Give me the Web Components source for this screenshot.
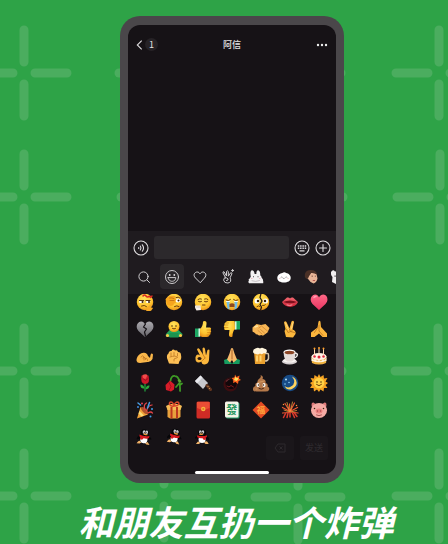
<!DOCTYPE html>
<html lang="zh-CN">
<head>
<meta charset="utf-8">
<meta name="viewport" content="width=device-width, initial-scale=1">
<title>阿信</title>
<style>
html, body { margin: 0; background: #2ea347; }
body { font-family: "Noto Sans CJK SC", sans-serif; }
</style>
</head>
<body>
<promo-stage>
  <phone-frame>
    <chat-header></chat-header>
    <chat-log></chat-log>
    <chat-input></chat-input>
    <sticker-tabs></sticker-tabs>
    <emoji-panel></emoji-panel>
  </phone-frame>
  <promo-caption slot="caption">和朋友互扔一个炸弹</promo-caption>
</promo-stage>
<script>
const define = (name, html, setup) => customElements.define(name, class extends HTMLElement {
  connectedCallback() {
    if (this.shadowRoot) return;
    this.attachShadow({ mode: 'open' }).innerHTML = html;
    if (setup) setup(this.shadowRoot, this);
  }
});

const BUTTON = 'button{all:unset;box-sizing:border-box;display:grid;place-items:center;cursor:pointer}svg{display:block}';

/* Stage with the sparkle pattern */
const cross = (x, y) => `<path d="M${x - 43} ${y}h32M${x + 11} ${y}h32M${x} ${y - 43}v32M${x} ${y + 11}v32"/>`;
const pattern = [[24, 73], [24, 197], [24, 371], [24, 496], [439, 73], [440, 197], [438, 371], [439, 496], [164, 495], [298, 497]]
  .map(([x, y]) => cross(x, y)).join('') + [[119, 73], [121, 197], [120, 371]]
  .map(([x, y]) => `<path d="M${x} ${y}h222"/>`).join('');
define('promo-stage', `<style>
:host{display:flex;flex-direction:column;box-sizing:border-box;min-height:100vh;padding:16px 104px 0 120px;position:relative;overflow:hidden}
.bg{position:absolute;inset:0;width:100%;height:100%}
.phone{position:relative;flex:1;display:flex}
</style>
<svg class="bg" viewBox="0 0 448 544" preserveAspectRatio="xMidYMid slice" aria-hidden="true"><g stroke="#4bad5f" stroke-width="9" stroke-linecap="round" fill="none">${pattern}</g></svg>
<div class="phone"><slot></slot></div><slot name="caption"></slot>`);

define('promo-caption', `<style>
:host{display:flex;justify-content:center;position:relative;padding:18px 0 3px 8px;margin:0 -60px;color:#fff;white-space:nowrap}
p{margin:0;font-size:35px;line-height:40px;font-weight:700;font-style:italic}
</style><p><slot></slot></p>`);

define('phone-frame', `<style>
:host{flex:1;min-width:0;display:flex;box-sizing:border-box;padding:9px 8px;border-radius:20px;background:#4a474a}
.screen{flex:1;min-width:0;display:flex;flex-direction:column;position:relative;overflow:hidden;border-radius:12px;background:#161216}
.home{position:absolute;left:50%;bottom:0;width:74px;height:3px;margin-left:-37px;border-radius:2px;background:#fff}
</style><div class="screen"><slot></slot><div class="home"></div></div>`);

define('chat-header', `<style>${BUTTON}
:host{display:grid;grid-template-columns:1fr auto 1fr;align-items:center;height:39px;padding:0 8px;color:#e4e2e4}
.left{display:flex;align-items:center;gap:1px}
.badge{width:13px;height:13px;border-radius:7px;background:#262226;font:9px/13px "Noto Sans CJK SC",sans-serif;text-align:center}
h1{margin:0;font-size:9px;line-height:14px;font-weight:500}
.more{justify-self:end}
</style>
<div class="left"><button aria-label="返回"><svg width="8" height="10" viewBox="0 0 8 10"><path d="M5.700.6 1.300 5l4.400 4.400" fill="none" stroke="#dddbdd" stroke-width="1.1"/></svg></button><span class="badge">1</span></div>
<h1>阿信</h1>
<button class="more" aria-label="更多"><svg width="12" height="4" viewBox="0 0 12 4" fill="#eee"><circle cx="2" cy="2" r="1.2"/><circle cx="6" cy="2" r="1.2"/><circle cx="10" cy="2" r="1.2"/></svg></button>`);

define('chat-log', `<style>:host{display:block;flex:1}</style><slot></slot>`);

define('chat-input', `<style>${BUTTON}
:host{display:flex;align-items:center;gap:5px;padding:5px 5px 3px;background:#1f1b1f}
input{flex:1;min-width:0;height:23px;box-sizing:border-box;border:0;border-radius:3px;background:#2c292c;color:#eee;font:10px "Noto Sans CJK SC",sans-serif;outline:0;padding:0 5px}
svg{fill:none;stroke:#dddbdd;stroke-width:1.1;stroke-linecap:round}
</style>
<button aria-label="语音"><svg width="16" height="16" viewBox="0 0 16 16"><circle cx="8" cy="8" r="7"/><path d="M5.700 7.500v1M7.300 6q1.400 2 0 4M9.300 4.800q2.500 3.200 0 6.400"/></svg></button>
<input type="text" aria-label="消息">
<button aria-label="键盘"><svg width="16" height="16" viewBox="0 0 16 16"><circle cx="8" cy="8" r="7"/><path d="M3.800 6h8.400M3.800 8.200h8.400" stroke-width="1.500" stroke-dasharray="1.500 .8" stroke-linecap="butt"/><path d="M6 10.900h4" stroke-width="1.300"/></svg></button>
<button aria-label="添加"><svg width="16" height="16" viewBox="0 0 16 16"><circle cx="8" cy="8" r="7"/><path d="M8 4.500v7M4.500 8h7"/></svg></button>`);

const tabs = [
  ['搜索', '<circle cx="8.500" cy="8.500" r="4.600"/><path d="m12 12 2.500 2.500"/>'],
  ['表情', '<circle cx="9" cy="9" r="6.500"/><circle cx="6.700" cy="7" r=".9" fill="#dddbdd" stroke="none"/><circle cx="11.300" cy="7" r=".9" fill="#dddbdd" stroke="none"/><path d="M5.200 9.600h7.600c-.2 5-7.400 5-7.600 0Z"/>'],
  ['收藏', '<path d="M9 14.500 4.500 10C1.400 6.800 4 4 6.200 4 7.800 4 8.500 5 9 6c.5-1 1.200-2 2.800-2 2.200 0 4.800 2.800 1.700 6Z"/>'],
  ['手势', '<path d="M6.300 9.200 4 5q-.3-1.500 1-1.300L7.500 8V3.500Q8.300 2 9.300 3.500v4.700l2.300-3.400q1.500-.5 1.300 1l-1.800 4q2 4.500-2.200 5.200-3.700.3-4.200-2.700-.3-2 1.600-3.100Z"/><path d="M6 10q2-.7 3 .8T7.500 12.600M12.600 2.500h2M13.600 1.500v2"/>'],
  ['兔子', '<g stroke="none"><path fill="#f3f1f2" d="M3.800 8.500C3 5 3.500 2 5.200 2.200S7.400 4 7.600 6h1.800C9.200 4 9.800 2 11.200 2.200s2.300 2.500 2 5q1.600 1 1.300 2.400 2.200 1.600 1.700 5.600H2q-1.200-1.200 0-3-1-1 .8-1.600Z"/><path fill="#4a4549" d="M6 8.300h1v1H6zM10.500 8.300h1v1h-1z"/><path d="M5 12.800q3.500 1.500 7.500-.2" fill="none" stroke="#b5adb2" stroke-width=".7"/><path fill="#e9a8af" d="M4 10h1.500v.8H4zM12 10h1.500v.8H12z"/></g>'],
  ['团子', '<g stroke="none"><path fill="#fff" d="M2.300 10c0-3 2.700-4.700 5-5 1-.8 3-1 3.800 0 2.500.3 4.800 2.500 4.600 5 0 3-3 4.500-6.700 4.500S2.300 13 2.300 10Z"/></g><path d="M6 9.200q.7-.7 1.400 0M10.600 9.200q.7-.7 1.400 0M8.300 10.400h1" stroke="#6b6568" stroke-width=".6"/><path stroke="none" fill="#f1b8b8" d="M4 10.200h1.400v.8H4zM12.400 10.200h1.400v.8h-1.400z"/>'],
  ['小孩', '<g stroke="none"><path fill="#e8b496" d="M3.500 6q5-4 10 0l1 4.500q-.8 4-3.900 5-3.300-.6-5-4L3 9.500Z"/><path fill="#4a3026" d="M1.800 8.500Q1.200 2.300 7.500 2q6-.2 6.500 4.500-3-1.800-5.800-1.500L6.500 7.500l-.6 1-1 2.200Q2.200 11 1.800 8.500Z"/><path fill="#5d3a2c" d="M8.500 7.800H10v.8H8.500zM11.800 7.800H13v.8h-1.200z"/><path fill="#b5574f" d="M9.800 12h2.200v1H9.800z"/></g>'],
  ['小狗', '<g stroke="none"><path fill="#f1eff0" d="M0 4q2-3 4-.5Q8 2 13 4.500v9l-8 2.500-4-2 .5-5Q-.5 7 0 4Z"/><path fill="#3d383b" d="M3.500 7.500h1.200v1.300H3.500z"/></g>']
];
define('sticker-tabs', `<style>${BUTTON}
:host{display:flex;gap:4px;padding:2px 0 5px 4px;background:#1f1b1f;overflow:hidden}
button{flex:none;width:24px;height:25px;border-radius:4px}
button[aria-selected=true]{background:#2b282b}
svg{fill:none;stroke:#cfcdcf;stroke-width:1;stroke-linecap:round;stroke-linejoin:round}
</style>${tabs.map(([n, p], i) => `<button role="tab" aria-label="${n}" aria-selected="${i === 1}"><svg width="18" height="18" viewBox="0 0 18 18">${p}</svg></button>`).join('')}`);

/* Emoji artwork on a 36-unit square */
const F = '<circle cx="18" cy="18" r="16.500" fill="url(#y)"/>';
const dot = (x, y, r = 2, c = '#3b2209') => `<circle cx="${x}" cy="${y}" r="${r}" fill="${c}"/>`;
const line = (d, c = '#6b3b0c', w = 2) => `<path d="${d}" fill="none" stroke="${c}" stroke-width="${w}" stroke-linecap="round" stroke-linejoin="round"/>`;
const fill = (d, c = 'url(#y)') => `<path d="${d}" fill="${c}"/>`;
const penguin = pose => `<g transform="${pose}">${fill('M12 26 6 29l-3 5h7l6-5zM22 26l6 3 4 5h-7l-6-5z', '#f2b268')}${fill('M9 15C3 18 0 24 3 26l8-5zM26 15c6 1 9 4 8 7l-8-2z', '#060608')}<ellipse cx="18" cy="20" rx="11" ry="12" fill="#060608"/><ellipse cx="18" cy="24" rx="8" ry="8" fill="#fff"/><ellipse cx="18" cy="9" rx="9" ry="8" fill="#060608"/><ellipse cx="16" cy="7" rx="3" ry="4" fill="#c9c9cf"/><ellipse cx="22" cy="7" rx="3" ry="4" fill="#c9c9cf"/>${dot(17, 8, 1.2)}${dot(21, 8, 1.2)}<ellipse cx="20" cy="12" rx="5" ry="1.800" fill="#e99a3a"/>${fill('M7 14q11 4 22 0v5q-5 3-12 2l-3 4-5-1 1-4-3-2z', '#d71920')}</g>`;
const art = [
  ['打脸', F + line('M7 15h8M20 15h8', '#5b3410', 2.500) + '<path fill="#fff" d="M6 16h9v4H7zM20 16h9l-2 4h-6z"/>' + dot(13, 18) + dot(26, 18) + line('M11 26q6-3 10 1') + line('M14 6q3-4 6 0t7 0l2 3 3-3', '#d92c22', 3) + fill('M20 35c0-5 5-7 8-11 3 0 3 3 1 5 5-1 6 2 3 4-2 4-8 5-12 2', '#f7aa26')],
  ['捂脸', F + '<ellipse cx="26" cy="15" rx="5" ry="4" fill="#fff"/>' + dot(27, 15) + line('M22 9q5-2 8 1M19 27q5-3 9 0') + fill('M1 13C3 6 14 4 20 6c3 2 0 4-3 4 6 0 8 4 3 6 4 3 1 6-2 5 0 6-10 6-14 2Z', '#f6a51e') + line('M9 10q5-1 9 1M10 15h8', '#ba6710', 1.500)],
  ['嘘', F + line('M8 13q4-3 7-1M21 12q4-2 7 1M9 17q3 2 6 0M21 17q3 2 6 0M17 24h5') + fill('M2 25h11l1 9-9 1q-4-4-3-10', '#f8f1ea') + line('M5 28h7', '#b7aaa0', 1)],
  ['大哭', F + line('M6 14q5 3 9-1M21 13q4 4 9 1') + fill('M7 17h6v16l-4-2zM23 17h6l-1 13-5 3z', '#6fbde8') + fill('M13 22q5-3 10 0v6H13z', '#8d4a1c') + line('M7 17h6M23 17h6', '#e9faff', 2)],
  ['裂开', F + '<ellipse cx="10" cy="16" rx="5" ry="5" fill="#fff"/><ellipse cx="27" cy="16" rx="5" ry="5" fill="#fff"/>' + dot(12, 16, 2.500) + dot(26, 16, 2.500) + line('m18 1-2 8 4 7-4 7 3 5-2 7', '#2a1a16', 2.500) + line('M10 27q4-3 6 0M21 25q4 1 6-2')],
  ['嘴唇', fill('M2 18 12 9q4-1 6 2 2-3 6-2l10 9c-6 13-25 13-32 0', 'url(#r)') + fill('M4 18q14-6 28 0-13 5-28 0', '#7d101d') + line('M12 24q5 2 10 0', '#ff9aa6', 2)],
  ['爱心', fill('M18 34 5 22C-2 14 2 4 10 3c5 0 7 3 8 6 1-3 4-6 9-6 8 1 11 11 4 19Z', 'url(#p)') + line('M8 9q1-2 4-2', '#ffa0b4', 3)],
  ['心碎', fill('M18 34 5 22C-2 14 2 4 10 3c5 0 7 3 8 6 1-3 4-6 9-6 8 1 11 11 4 19Z', 'url(#g)') + line('m19 8-4 6 6 4-4 6 2 8', '#161216', 2.500)],
  ['拥抱', fill('M5 34Q0 34 2 28l8-9h16l9 9q0 6-6 6z', '#23a45a') + fill('M9 26h18v9H9z', '#1c9350') + '<circle cx="18" cy="13" r="11" fill="url(#y)"/>' + dot(14, 12, 1.500) + dot(22, 12, 1.500) + line('M15 17q3 2 6 0') + '<circle cx="5" cy="31" r="3" fill="#ffc846"/><circle cx="31" cy="31" r="3" fill="#ffc846"/>'],
  ['强', fill('M2 17h10v17H2z', '#1ca863') + fill('M9 17h4v16H9z', '#d8f6e1') + fill('M12 18c4-4 6-9 6-15 4-3 8 0 7 5l-1 7h8q4 2 1 5 3 2 0 5 1 4-2 5-1 4-5 4H16l-4-2Z') + line('M26 20h6M27 25h5M26 30h4', '#ce7d10', 1.200)],
  ['弱', fill('M24 2h10v17H24z', '#1ca863') + fill('M23 3h4v16h-4z', '#d8f6e1') + fill('M24 18c-4 4-5 9-5 15-4 3-8 0-7-5l1-8H5q-4-1-2-5-3-2 0-5-1-4 2-5 2-4 6-3h12Z') + line('M4 15h6M4 10h6M6 6h5', '#ce7d10', 1.200)],
  ['握手', fill('M1 15 9 8l9 2 9-2 8 8-4 9-7 5q-3 2-5 0-5 2-8-1-4 0-5-3l-5-3Z', '#f8b655') + line('m14 16 5-4 13 11M17 19l8 7M12 21l8 7', '#c47b2c', 1.300) + line('m6 14 5-2', '#ffe399', 3)],
  ['胜利', fill('M10 34 7 22 9 18 6 5q2-4 5-1l6 13 4-14q4-3 5 1l-3 15q8 3 6 9l-5 7Z', '#fbb73d') + line('m11 19 3 6 8-3M16 17l3 6 8 2', '#b87020', 1.500) + line('m9 6 6 13M24 5l-3 12', '#ffe59a', 1.500)],
  ['抱拳', fill('M2 34v-9l13-10 2-12q3-3 4 1l1 10 12 13v7H25l-7-7-9 7Z', '#fbb53d') + line('M18 10v12l8 9M15 16l-6 9', '#b87020', 1.500)],
  ['勾引', fill('M1 27c0-7 5-14 12-15 6-2 10 2 11 6l4 4 1-6q2-5 5-1l-1 9q-4 7-10 6l-15 2Q2 32 1 27', '#fab74a') + line('M10 20q4-5 6 0v6M14 22q5-4 5 3M19 23q4-2 4 4', '#b87020', 1.500)],
  ['拳头', fill('M8 33 4 22q-1-7 3-9 0-6 6-5 3-5 7-1 5-2 6 3 6 0 6 6 2 8-3 12l-2 6Z', '#fdbf55') + line('M12 12v6M18 11v6M25 13v5M10 20q12-4 15 1l-7 3v4', '#b87020', 1.500)],
  ['OK', fill('M3 20q3-8 9-3L6 5q2-4 5-1l7 11-1-12q3-4 5 1l2 13 3-11q4-2 4 1l-1 19q-1 8-9 9-6 0-6-6c-7 4-12 1-12-5Z', '#fbb73d') + '<ellipse cx="11" cy="23" rx="4" ry="3" fill="#27180e"/>' + line('M18 15l4 7M17 27l5-5', '#bd7015', 1.500)],
  ['合十', fill('M2 26 10 23l8 11H3zM34 26l-8-3-8 11h15z', '#169c60') + fill('m8 25 5-12 3-10q2-2 4 0l3 10 5 12-7 6-3-5-4 5Z', '#f8b96a') + line('M18 6v18', '#a55d25', 1.800)],
  ['啤酒', line('M26 13h5q2 0 2 3v7q-1 5-7 5', '#d3c3a8', 3) + fill('M4 8h23l-1 26H6Z', '#eaa02e') + fill('M8 17h4v12H8zM15 17h4v12h-4z', '#ffd26d') + fill('M3 12q-3-7 4-9 5-3 9 0 4-3 8 0 8 1 5 8-3 3-5 1-4 4-8 1-5 4-13-1', '#fff5dd')],
  ['咖啡', '<ellipse cx="17" cy="29" rx="15" ry="6" fill="#d5ced0"/><ellipse cx="17" cy="27" rx="13" ry="4" fill="#f9f5f3"/>' + line('M26 12q9 0 6 6-2 4-8 4', '#eee9e7', 3) + fill('M5 10h24q0 17-8 19h-8Q6 27 5 10', '#e4dbd8') + '<ellipse cx="17" cy="10" rx="12" ry="5" fill="#fff"/><ellipse cx="17" cy="11" rx="10" ry="3.500" fill="#8b4525"/>'],
  ['蛋糕', fill('M3 19q15-8 30 0l-1 13q-14 6-28 0Z', '#f0b557') + '<ellipse cx="18" cy="19" rx="15" ry="7" fill="#fff5e8"/>' + fill('M3 20q4 9 7 3 4 8 8 2 4 7 8-1 4 6 7-4v8q-15 7-30 0Z', '#fff4df') + line('M9 15V5M18 14V4M27 15V5', '#ffd8ae', 2) + dot(9, 3, 2, '#ff9e28') + dot(18, 2, 2, '#ff9e28') + dot(27, 3, 2, '#ff9e28') + dot(9, 19, 2.500, '#dd2638') + dot(18, 20, 3, '#dd2638') + dot(27, 19, 2.500, '#dd2638') + line('M5 30q13 5 26 0', '#efb03a', 3)],
  ['玫瑰', line('M18 17v17', '#1e8a36', 3) + fill('M17 29Q8 30 9 21q7 1 8 8M19 31q8-1 8-8-7-1-8 8', '#2eaa3d') + fill('M11 3h14q4 16-6 17-11 0-8-17', '#cc1728') + fill('M13 2q8-3 10 1l-4 7-5-1Z', '#f34a4a') + line('m14 9 5 4 5-4', '#8f0c1b', 1.500)],
  ['凋谢', line('M30 34q1-30-10-30-8-1-9 10M28 19l-6 7M30 22l4-3', '#3e9b25', 3.500) + fill('m10 13 9 8-1 10-6 4-10-3-1-10Z', '#d71d29') + line('m8 17 4 8-4 8', '#9b0e1e', 1.500) + fill('M25 12q6-4 8 4-6 2-8-4', '#58a52d')],
  ['菜刀', fill('M2 14 13 3l15 15-10 12Z', '#c7c8cd') + fill('M2 14 13 3l4 4L6 19Z', '#e9e9ed') + line('m26 23 7 8', '#60331e', 6) + dot(28, 25, 1, '#dfad5c') + dot(31, 29, 1, '#dfad5c')],
  ['炸弹', '<circle cx="15" cy="21" r="14" fill="#3d0d10"/><circle cx="16" cy="19" r="11" fill="#12070a"/>' + fill('M5 14q5-6 12-5-6 1-10 7Z', '#6b2c30') + line('M21 12q1-6 6-4', '#b2703d', 3) + fill('m24 1 3 5 6-3-1 6 4 3-5 2-1 6-5-4-5 2 1-6-4-4 6-1Z', '#ff631f') + fill('m25 5 2 3 4 0-1 3-3 3-5-2Z', '#ffe15a') + line('m8 24 4 2 4-3 5 3', '#7d1a1d', 2)],
  ['便便', fill('M17 2q7 2 4 8 8 1 6 8 6 1 4 7 5 2 3 7-1 3-7 3H9Q1 35 2 29q0-4 5-5-2-6 4-7-1-5 4-8 4-3 2-7', '#b5794a') + line('M12 17q6-1 12-3M8 30h2', '#d59960', 2) + '<ellipse cx="12" cy="22" rx="3" ry="4" fill="#fff"/><ellipse cx="24" cy="22" rx="3" ry="4" fill="#fff"/>' + dot(13, 22, 1.600) + dot(23, 22, 1.600) + line('M14 29q5 3 9 0', '#4b2818', 2)],
  ['月亮', '<circle cx="18" cy="18" r="16.500" fill="#174b86"/>' + fill('M22 5q10 13-2 20-7 4-13-1 5 10 15 6 13-6 8-18-2-5-8-7', '#ffd35e') + dot(10, 11, 2, '#b9e5ff') + dot(16, 17, 1.500, '#9edcff') + dot(8, 20, 1.500, '#9edcff')],
  ['太阳', fill('m18 0 3 6 6-4 1 7 7-1-4 7 5 3-5 4 4 6-7 0-1 7-6-4-3 5-4-5-6 4-1-7-7 0 4-6-4-4 5-3-4-7 7 1 1-7 6 4Z', '#f5a323') + '<circle cx="18" cy="18" r="10.500" fill="#ffd145"/>' + dot(14, 16, 1.500) + dot(22, 16, 1.500) + line('M13 21q5 5 10 0')],
  ['庆祝', fill('m9 12 15 15L2 35Z', '#f2a239') + fill('m7 20 9 9-5 2-6-6Z', '#f9de79') + '<ellipse cx="17" cy="19" rx="4" ry="9" transform="rotate(-45 17 19)" fill="#af542b"/>' + line('M18 17q-4-9 3-13M21 20q3-11 11-12M24 24q6-4 9 0', '#e34447', 2.500) + line('M23 14 27 3M9 8 4 4', '#4a9de3', 3) + dot(12, 5, 2, '#e64454') + dot(32, 16, 2, '#3fa0e6') + dot(29, 31, 2, '#3fa0e6') + dot(4, 12, 2, '#3f8de0')],
  ['礼物', fill('M5 14h26v18l-5 3H10l-5-3Z', '#e7a03c') + fill('m2 10 8-4h17l7 4-3 8H5Z', '#f6bc56') + fill('M11 12h4v23h-4zM22 12h4v22h-4z', '#bc371f') + line('M18 10C9 12 6 2 12 2q4 0 6 8 2-8 7-8c6 1 2 9-7 8', '#d7482a', 3)],
  ['红包', '<rect x="5" y="1" width="27" height="34" rx="3" fill="#cf2b25"/>' + fill('M6 2h25v12q-12 7-25 0Z', '#eb4d35') + dot(18.500, 16, 4.500, '#f6b33f') + dot(18.500, 16, 2, '#e37a25')],
  ['發', '<rect x="6" y="3" width="27" height="32" rx="3" fill="#26996a"/><rect x="4" y="1" width="27" height="32" rx="3" fill="#f5f4e8"/><text x="17.500" y="25" font-size="22" font-weight="700" text-anchor="middle" fill="#2b9962">發</text>'],
  ['福', fill('m18 1 17 17-17 17L1 18Z', '#e34b23') + '<text x="18" y="24" font-size="17" font-weight="700" text-anchor="middle" fill="#ffa53b">福</text>'],
  ['烟花', line('M18 21 17 6M18 21 8 5M18 21 3 13M18 21 27 4M18 21l15-8M17 23 3 24M19 22l15 2', '#eb5731', 2.500) + line('M17 21 12 3M19 20 23 2M19 22 31 19M17 22 6 18', '#f2aa41', 1.500) + line('M9 25 5 33M14 24l-2 9M18 23v9M23 24l4 9M27 24l5 7', '#d93a2d', 3) + dot(5, 7, 1.500, '#ff973a') + dot(31, 9, 1.500, '#ff973a')],
  ['猪头', fill('M4 13Q1 3 7 3l7 5M32 13q3-10-3-10l-7 5', '#df7b7b') + '<ellipse cx="18" cy="19" rx="16" ry="15" fill="#f5aaa4"/>' + dot(9, 15, 1.500) + dot(27, 15, 1.500) + '<ellipse cx="18" cy="20" rx="7" ry="5" fill="#ed827f"/>' + dot(15, 20, 1.500, '#a2464a') + dot(21, 20, 1.500, '#a2464a') + line('M13 28q5 3 10 0', '#9f474b', 1.800)],
  ['跳跳', penguin('translate(0 2) rotate(8 18 18) scale(.9)')],
  ['发抖', penguin('translate(3 1) rotate(12 18 18) scale(.88)')],
  ['转圈', penguin('translate(32 2) scale(-.88 .88)')]
];
const DEFS = `<defs><radialGradient id="y" cx=".45" cy=".3" r=".75"><stop stop-color="#ffe45d"/><stop offset=".65" stop-color="#ffc32e"/><stop offset="1" stop-color="#e48a18"/></radialGradient><linearGradient id="r" x2="0" y2="1"><stop stop-color="#f66a72"/><stop offset="1" stop-color="#c91e33"/></linearGradient><linearGradient id="p" x2="0" y2="1"><stop stop-color="#ff6886"/><stop offset="1" stop-color="#e93462"/></linearGradient><linearGradient id="g" x2="0" y2="1"><stop stop-color="#aaa8ad"/><stop offset="1" stop-color="#68666c"/></linearGradient></defs>`;

define('emoji-key', `<style>${BUTTON}:host{display:grid;place-items:center;height:27px}button{font-family:"Noto Sans CJK SC",sans-serif}</style><button><svg width="18" height="18" viewBox="0 0 36 36"></svg></button>`, (root, host) => {
  const [label, shapes] = art[+host.getAttribute('index')];
  root.querySelector('button').setAttribute('aria-label', label);
  root.querySelector('svg').innerHTML = DEFS + shapes;
});

define('emoji-panel', `<style>${BUTTON}
:host{display:block;position:relative;height:180px;overflow:hidden}
.grid{display:grid;grid-template-columns:repeat(7,1fr);margin-top:-6px;padding:0 2px}
.actions{position:absolute;right:8px;bottom:14px;display:flex;gap:6px}
.actions button{width:28px;height:24px;border-radius:3px;background:#1a161a;color:#2d292d;font-size:9px;line-height:14px;font-weight:500}
</style>
<div class="grid">${art.map((_, i) => `<emoji-key index="${i}"></emoji-key>`).join('')}</div>
<div class="actions"><button aria-label="删除"><svg width="12" height="10" viewBox="0 0 12 10" fill="none" stroke="#2d292d" stroke-width="1"><path d="M4 1h7v8H4L1 5ZM5.500 3.500l3 3M8.500 3.500l-3 3"/></svg></button><button>发送</button></div>`);
</script>
</body>
</html>
